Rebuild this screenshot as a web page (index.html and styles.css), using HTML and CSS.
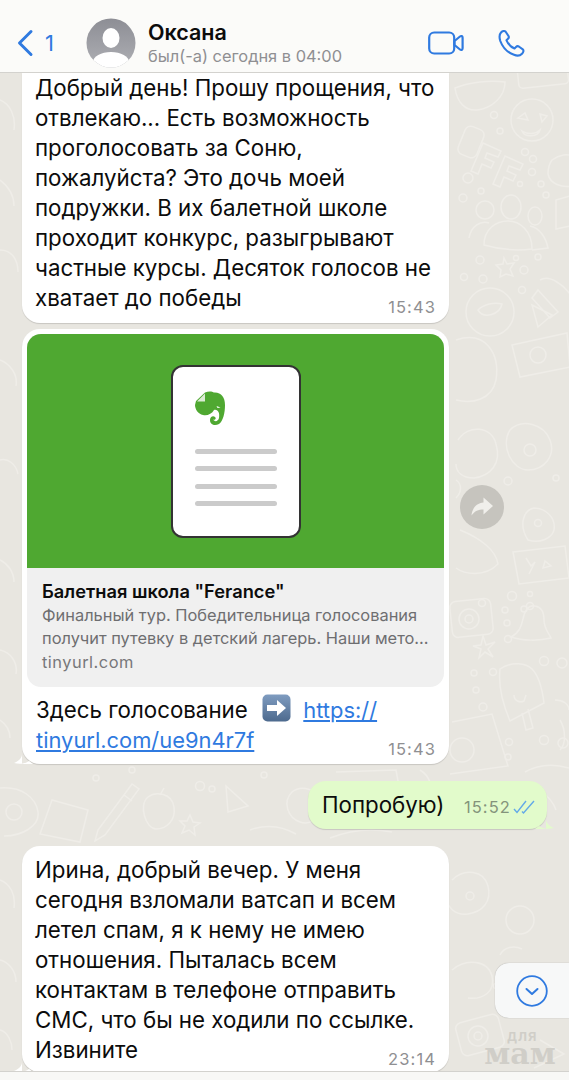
FILE: index.html
```html
<!DOCTYPE html>
<html lang="ru">
<head>
    <meta charset="UTF-8">
    <title>Оксана</title>
    <link rel="stylesheet" href="styles.css">
</head>
<body>
    <header class="top-bar">
        <div class="back">
            <svg width="18" height="28" viewBox="0 0 18 28"><path d="M15 2.500 3.500 14 15 25.500" fill="none" stroke="#2f7ae0" stroke-width="3" stroke-linecap="round" stroke-linejoin="round"/></svg>
            <span>1</span>
        </div>
        <svg class="avatar" width="50" height="50" viewBox="0 0 50 50">
            <defs>
                <clipPath id="round"><circle cx="25" cy="25" r="24.500"/></clipPath>
                <linearGradient id="ava" x1="0" y1="0" x2="0" y2="1"><stop offset="0" stop-color="#8d8e95"/><stop offset="1" stop-color="#aeafb4"/></linearGradient>
                <linearGradient id="key" x1="0" y1="0" x2="0" y2="1"><stop offset="0" stop-color="#7f9cc0"/><stop offset="1" stop-color="#4d6a8e"/></linearGradient>
            </defs>
            <circle cx="25" cy="25" r="24.500" fill="url(#ava)"/>
            <g clip-path="url(#round)" fill="#fff">
                <ellipse cx="25" cy="20" rx="8.500" ry="10"/>
                <ellipse cx="25" cy="44" rx="18" ry="10"/>
            </g>
        </svg>
        <div class="contact">
            <div class="name">Оксана</div>
            <div class="seen">был(-а) сегодня в 04:00</div>
        </div>
        <svg class="video" width="36" height="24" viewBox="0 0 36 24"><rect x="1.200" y="1.500" width="25" height="21" rx="5" fill="none" stroke="#2f7ae0" stroke-width="2.200"/><path d="M26.500 10 32 5.500c1.200-1 2.600-.4 2.600 1.200v10.600c0 1.600-1.400 2.200-2.600 1.200L26.500 14z" fill="none" stroke="#2f7ae0" stroke-width="2.200" stroke-linejoin="round"/></svg>
        <svg class="phone" width="28" height="28" viewBox="0 0 28 28"><path d="M3 3.500C4.500 2 6.500 1.500 7.500 2.500l3 4.500c.6 1 .3 2-.5 2.800L8.500 11.300c1.500 3.500 4.500 6.700 8 8.200l1.500-1.500c.8-.8 1.800-1.100 2.800-.5l4 2.800c1.100.9.700 3-.8 4.500-2 2-5 2.300-8 1C9.500 23.500 4.500 18 2.300 12 1.200 8.500 1.200 5.500 3 3.500z" fill="none" stroke="#2f7ae0" stroke-width="2.100" stroke-linejoin="round"/></svg>
    </header>

    <main class="chat">
        <svg class="doodles" width="569" height="998" viewBox="0 73 569 998" fill="none" stroke="#efede8" stroke-width="1.500">
            <!-- bowl and smiley, top right -->
            <path d="M455 88c15-6 35-8 50-6 0 14-12 26-28 28-12 1-20-8-22-22z"/>
            <rect x="518" y="66" width="50" height="20" rx="4" transform="rotate(-6 543 76)"/>
            <circle cx="532" cy="120" r="21"/>
            <path d="M518 118l7-5 3 7zM540 114l7 2-5 6zM522 131c6 4 14 3 18-1-2 7-15 8-18 1z"/>
            <!-- BFF -->
            <rect x="461" y="127" width="20" height="30" rx="6" transform="rotate(22 471 142)"/>
            <path d="M483 143l18 8-3 6-11-4-2 5 9 4-3 6-9-4-4 10-7-3z"/>
            <path d="M505 156l18 8-3 6-11-4-2 5 9 4-3 6-9-4-4 10-7-3z"/>
            <circle cx="494" cy="115" r="3.500"/><circle cx="500" cy="131" r="3"/><circle cx="525" cy="152" r="3.500"/><circle cx="533" cy="159" r="3.500"/>
            <circle cx="532" cy="172" r="3.500"/><circle cx="520" cy="184" r="2.500"/><circle cx="541" cy="184" r="3"/><circle cx="546" cy="195" r="3"/>
            <circle cx="468" cy="178" r="5"/><circle cx="481" cy="191" r="3"/><circle cx="463" cy="198" r="4"/>
            <path d="M552 160c8-6 16-6 20-4v30c-10 2-22-2-24-12 0-6 1-10 4-14z"/>
            <!-- people -->
            <circle cx="485" cy="210" r="9"/><ellipse cx="511" cy="207" rx="10" ry="12"/><ellipse cx="535" cy="216" rx="7" ry="9"/>
            <path d="M484 245c0-16 12-24 24-24s24 10 24 28c-16 2-34 0-48-4z"/>
            <path d="M469 238c2-12 12-18 20-15M530 226c10 2 16 12 18 22l-16 2"/>
            <path d="M556 200l14-4v30l-14 3z"/>
            <path d="M504 258l3 6 7-1-4 6 3 7-7-2-6 3 1-7-5-5 7-1z"/>
            <circle cx="480" cy="260" r="4"/><circle cx="464" cy="277" r="3.500"/><circle cx="483" cy="279" r="4"/><circle cx="524" cy="270" r="4"/><circle cx="522" cy="290" r="3.500"/><circle cx="516" cy="258" r="2.500"/><circle cx="538" cy="257" r="3"/>
            <circle cx="490" cy="312" r="24"/><path d="M478 310c6-6 16-8 24-6-2 10-18 16-24 6z"/>
            <path d="M540 280c10-6 24 6 30 14M538 290l20 22-8 6-18-20zM532 305l20 10-14 12z"/>
            <!-- middle right -->
            <path d="M456 340c30-10 44 14 40 40-4 20-24 24-40 20"/>
            <path d="M512 345l55-12 3 34-50 10z"/><circle cx="538" cy="355" r="8"/>
            <path d="M458 440c10-16 34-14 38 4 6 20-6 32-22 34-12 0-18-6-18-14"/>
            <path d="M510 430c12-12 34-6 40 10s-6 30-22 30-28-24-18-40z"/><circle cx="530" cy="450" r="6"/>
            <path d="M528 540c-10-16-4-30 6-32 12 0 22 10 20 22-2 8-14 14-26 10z"/><circle cx="538" cy="523" r="3.500"/>
            <path d="M456 480c6 4 6 12 0 18M460 530c20 8 36 20 38 34-14 14-34 10-42 4"/>
            <circle cx="508" cy="481" r="4"/><circle cx="556" cy="478" r="3"/>
            <!-- camera, bell, popsicle -->
            <path d="M513 552l52-6 4 32-50 6z"/><path d="M526 558l5 8 4-4-6 12M545 561l6 5-8 2z"/>
            <rect x="451" y="600" width="41" height="36" rx="6" transform="rotate(-6 471 618)"/><circle cx="469" cy="619" r="10"/><circle cx="469" cy="619" r="4"/><circle cx="482" cy="603" r="3.500"/>
            <path d="M511 637c8-4 10-10 12-18 2-9 6-14 12-13 7 1 9 6 9 14 0 8 4 12 7 18-12 3-28 3-40-1z"/><circle cx="530" cy="606" r="3.500"/>
            <circle cx="512" cy="596" r="4.500"/><circle cx="530" cy="594" r="2.500"/><circle cx="505" cy="610" r="3"/><circle cx="524" cy="609" r="3"/><circle cx="507" cy="623" r="3"/><circle cx="508" cy="639" r="3.500"/>
            <path d="M483 636l3 9 9-3-7 7 5 8-8-5-6 6 2-9-8-3 8-1z"/>
            <path d="M500 669c12-8 26-6 32 0s10 18 12 34l-34 18c-6-14-12-34-10-52z"/><path d="M522 713l4 17 7-2-5-19"/><path d="M514 695c0 6 6 8 10 6l2-6"/>
            <circle cx="544" cy="661" r="4.500"/><circle cx="562" cy="663" r="5"/><circle cx="474" cy="673" r="3"/><circle cx="493" cy="672" r="3.500"/><circle cx="476" cy="690" r="3"/><circle cx="483" cy="707" r="4"/><circle cx="509" cy="742" r="3.500"/><circle cx="508" cy="757" r="3"/><circle cx="544" cy="740" r="4.500"/><circle cx="563" cy="743" r="5"/>
            <path d="M452 722l40-8 16 52-58 8"/><circle cx="462" cy="750" r="12"/>
            <path d="M555 700c8 0 14 4 14 10M560 720c6 10 6 24 0 30M525 772c14-8 30-8 44-4"/>
            <!-- strip between messages -->
            <path d="M98 830l34-46 7 5-34 46-10 6z"/><path d="M124 795l8 6"/>
            <path d="M148 797c8-6 24-4 26 10s-8 22-18 22-18-24-8-32z"/><path d="M160 795l4-7"/>
            <path d="M226 786l22 20-20 6z"/>
            <path d="M190 815l3 7 7 1-6 4 1 8-6-5-7 3 3-7-5-5 7 0z"/>
            <circle cx="200" cy="786" r="4.500"/><circle cx="212" cy="789" r="3"/><circle cx="96" cy="778" r="3"/><circle cx="264" cy="775" r="3"/><circle cx="132" cy="770" r="3"/>
            <path d="M0 788c22-2 36 10 38 24s-16 24-34 24"/><circle cx="14" cy="812" r="8"/>
            <path d="M52 800l36 10-8 32-40-8z"/>
            <path d="M292 792c10-8 26-2 30 10s-10 24-22 20-18-20-8-30z"/>
            <path d="M336 772l60-2 4 22"/><path d="M250 830c16-6 32-4 46 4M420 770c10 6 14 18 10 30"/><path d="M470 790c12-2 24 4 26 16"/>
            <path d="M330 838c20-8 42-10 62-6M540 790c8 6 14 14 16 20"/>
            <!-- lower right -->
            <path d="M452 880c12-12 32-10 36 6s-6 26-20 28-20-8-22-14"/><circle cx="470" cy="896" r="4"/>
            <circle cx="520" cy="920" r="14"/>
            <rect x="458" y="1018" width="44" height="34" rx="6" transform="rotate(-15 480 1035)"/><circle cx="478" cy="1036" r="10"/><circle cx="478" cy="1036" r="4"/>
            <path d="M452 970c14-12 36-10 40 6s-10 24-24 22"/><path d="M500 955c4-8 14-10 22-6M540 1040l24 14-30 14"/><circle cx="500" cy="1000" r="3"/><circle cx="496" cy="986" r="2.500"/>
            <!-- left edge -->
            <path d="M0 100c10 4 16 16 14 30M0 180c8 6 14 14 14 26M0 250c12 0 18 10 18 22M0 360c10 4 18 14 16 26M0 460c8-2 16 4 18 14M0 560c8 4 14 12 14 22M0 650c10 2 18 12 16 24M0 720c6 4 10 10 10 18M0 880c10 4 16 14 14 28M0 960c8 2 16 10 16 22M0 1030c8 2 12 12 12 20"/>
        </svg>

        <div class="bubble first">
            <p>Добрый день! Прошу прощения, что<br>отвлекаю... Есть возможность<br>проголосовать за Соню,<br>пожалуйста? Это дочь моей<br>подружки. В их балетной школе<br>проходит конкурс, разыгрывают<br>частные курсы. Десяток голосов не</p>
            <div class="end-row">
                <span>хватает до победы</span>
                <time class="stamp">15:43</time>
            </div>
        </div>

        <div class="bubble link-msg tail-left">
            <div class="card">
                <div class="card-pic">
                    <div class="sheet">
                        <svg class="elephant" width="32" height="36" viewBox="0 0 32 36">
                            <path d="M1 10 10 1.500C13 0 17 0 19 1.500 26 1 30 6 30 14 30 22 28 30 24 33 20 35 15 34 15 29 15 26 18 24 20 26 22 28 19 30 18 28 19 31 23 31 24 27 25 22 23 18 19 19 17 23 12 25 8 24 3 23 0 18 0 14z" fill="#4fa831"/>
                            <path d="M2 10.500 10 2.500v8z" fill="#dcebd5"/>
                            <path d="M21.500 15l4 1.500-3 .5z" fill="#fff"/>
                        </svg>
                        <div class="lines">
                            <i></i><i></i><i></i><i></i>
                        </div>
                    </div>
                </div>
                <div class="card-text">
                    <div class="card-title">Балетная школа "Ferance"</div>
                    <div class="card-desc">Финальный тур. Победительница голосования<br>получит путевку в детский лагерь. Наши мето...</div>
                    <div class="card-site">tinyurl.com</div>
                </div>
            </div>
            <p class="after-card">Здесь голосование <svg class="emoji" width="29" height="28" viewBox="0 0 29 28"><rect x=".5" y=".5" width="28" height="27" rx="5" fill="url(#key)"/><path d="M5 11h10V6l9 8-9 8v-5H5z" fill="#fff"/></svg> <a href="#">https://</a></p>
            <div class="end-row link-row">
                <a href="#">tinyurl.com/ue9n4r7f</a>
                <time class="stamp">15:43</time>
            </div>
        </div>

        <div class="bubble mine">
            <p>Попробую)</p>
            <div class="mine-meta">
                <time class="stamp">15:52</time>
                <svg width="24" height="16" viewBox="0 0 24 16" fill="none" stroke="#62a9e8" stroke-width="1.400"><path d="M1 10l3 3.500L13 2M9 12.500l1.500 1.500L21 2"/></svg>
            </div>
        </div>

        <div class="bubble last tail-left">
            <p>Ирина, добрый вечер. У меня<br>сегодня взломали ватсап и всем<br>летел спам, я к нему не имею<br>отношения. Пыталась всем<br>контактам в телефоне отправить<br>СМС, что бы не ходили по ссылке.</p>
            <div class="end-row">
                <span>Извините</span>
                <time class="stamp">23:14</time>
            </div>
        </div>

        <div class="forward">
            <svg width="24" height="22" viewBox="0 0 24 22"><path d="M13.500 1.500 23 10l-9.500 8.500v-5c-5 0-9 1.500-12 6 .5-7 5-12.500 12-13z" fill="#f0efeb"/></svg>
        </div>

        <div class="to-bottom">
            <svg width="32" height="32" viewBox="0 0 32 32" fill="none" stroke="#2f7ae0" stroke-width="1.800"><circle cx="16" cy="16" r="14.800"/><path d="M10.500 14l5.500 5 5.500-5" stroke-width="2" stroke-linecap="round" stroke-linejoin="round"/></svg>
        </div>

        <div class="watermark"><span>для</span><b>мам</b></div>
    </main>

    <div class="bottom-bar"></div>
</body>
</html>
```

FILE: styles.css
```css
* { box-sizing: border-box; }
html, body { margin: 0; padding: 0; }
body { width: 569px; height: 1080px; overflow: hidden; font-family: Inter, "Liberation Sans", sans-serif; background: #e8e6e0; color: #0c0c0c; }

.top-bar { height: 73px; display: flex; align-items: center; background: #fbfbf9; border-bottom: 1px solid #d3d2ce; padding-top: 13px; }
.back { display: flex; align-items: center; gap: 11px; margin-left: 16px; width: 70px; color: #2f7ae0; font-size: 22px; }
.avatar { flex: none; }
.contact { margin-left: 12px; flex: 1; align-self: flex-start; padding-top: 6px; }
.name { font-size: 21.500px; font-weight: 600; line-height: 26px; }
.seen { font-size: 16.400px; color: #8f8f92; line-height: 22px; }
.video { margin-right: 34px; }
.phone { margin-right: 43px; }

.chat { position: relative; height: 998px; overflow: hidden; padding-left: 22px; }
.doodles { position: absolute; left: 0; top: 0; }

.bubble { position: relative; width: 427px; background: #fff; border-radius: 18px; padding: 0 13px; box-shadow: 0 1px 1px rgba(0,0,0,0.14); font-size: 22.300px; line-height: 30px; }
.bubble p { margin: 0; }
.stamp { font-size: 16.500px; letter-spacing: 1.100px; color: #8f8f92; }
.end-row { display: flex; justify-content: space-between; }
.end-row .stamp { line-height: 20px; margin-top: 14px; }

.tail-left::after { content: ""; position: absolute; left: -9px; bottom: 0; width: 20px; height: 18px; background: #fff; clip-path: path("M9 0V8C9 12 6 15 1 17 6 18.500 12 18 16 15L20 18H9z"); }

.first { height: 250px; border-radius: 0 0 18px 18px; }

.link-msg { margin-top: 6px; height: 435px; padding: 5px 5px 0; }
.card { border-radius: 14px; overflow: hidden; background: #f0f0f0; height: 353px; }
.card-pic { height: 234px; background: #4fa831; display: flex; justify-content: center; align-items: center; }
.sheet { width: 130px; height: 173px; background: #fff; border: 2px solid #333; border-radius: 12px; padding: 24px 22px; }
.elephant { display: block; }
.lines { margin-top: 22px; display: flex; flex-direction: column; gap: 12.500px; }
.lines i { display: block; height: 5px; width: 82px; background: #cbcbcb; border-radius: 3px; }
.card-text { padding: 11px 15px; }
.card-title { font-size: 18.300px; font-weight: 600; line-height: 24px; }
.card-desc { font-size: 16.400px; line-height: 23px; color: #6e6e70; margin-top: 1px; white-space: nowrap; }
.card-site { font-size: 16.400px; letter-spacing: .5px; line-height: 22px; color: #77777a; margin-top: 1px; }
.after-card { padding: 7px 9px 0; }
.link-row { padding: 0 8px 0 9px; }
.bubble a { color: #2f7ae0; font-size: 21.900px; }
.emoji { vertical-align: -4px; margin: 0 6px 0 8px; }

.mine { margin: 17px 0 0 286px; width: 239px; height: 48px; background: #e2fbcb; display: flex; justify-content: space-between; padding: 9px 10px 0 14px; }
.mine::after { content: ""; position: absolute; right: -8px; bottom: 0; width: 20px; height: 18px; background: #e2fbcb; clip-path: path("M11 0V8C11 12 14 15 19 17 14 18.500 8 18 4 15L0 18H11z"); }
.mine-meta { display: flex; align-items: center; gap: 2px; margin-top: 6px; height: 22px; }
.mine .stamp { color: #84947b; }

.last { margin-top: 17px; height: 226px; padding-top: 9px; }

.forward { position: absolute; left: 460px; top: 412px; width: 44px; height: 44px; border-radius: 50%; background: #c6c4be; display: flex; align-items: center; justify-content: center; }
.to-bottom { position: absolute; left: 495px; top: 890px; width: 74px; height: 55px; background: #f7f8f8; border-radius: 14px 0 0 14px; box-shadow: 0 0 1px rgba(0,0,0,0.35); display: flex; align-items: center; padding-left: 21px; }
.watermark { position: absolute; left: 480px; top: 956px; width: 80px; display: flex; flex-direction: column; align-items: center; color: #d0cec8; }
.watermark span { font-size: 15px; line-height: 14px; font-weight: 600; letter-spacing: 1px; margin-left: 5px; }
.watermark b { font-family: "DejaVu Serif", serif; font-size: 30px; line-height: 22px; font-weight: 700; }

.bottom-bar { height: 9px; background: #f8f8f6; border-top: 1px solid #d3d2ce; position: relative; }
```
